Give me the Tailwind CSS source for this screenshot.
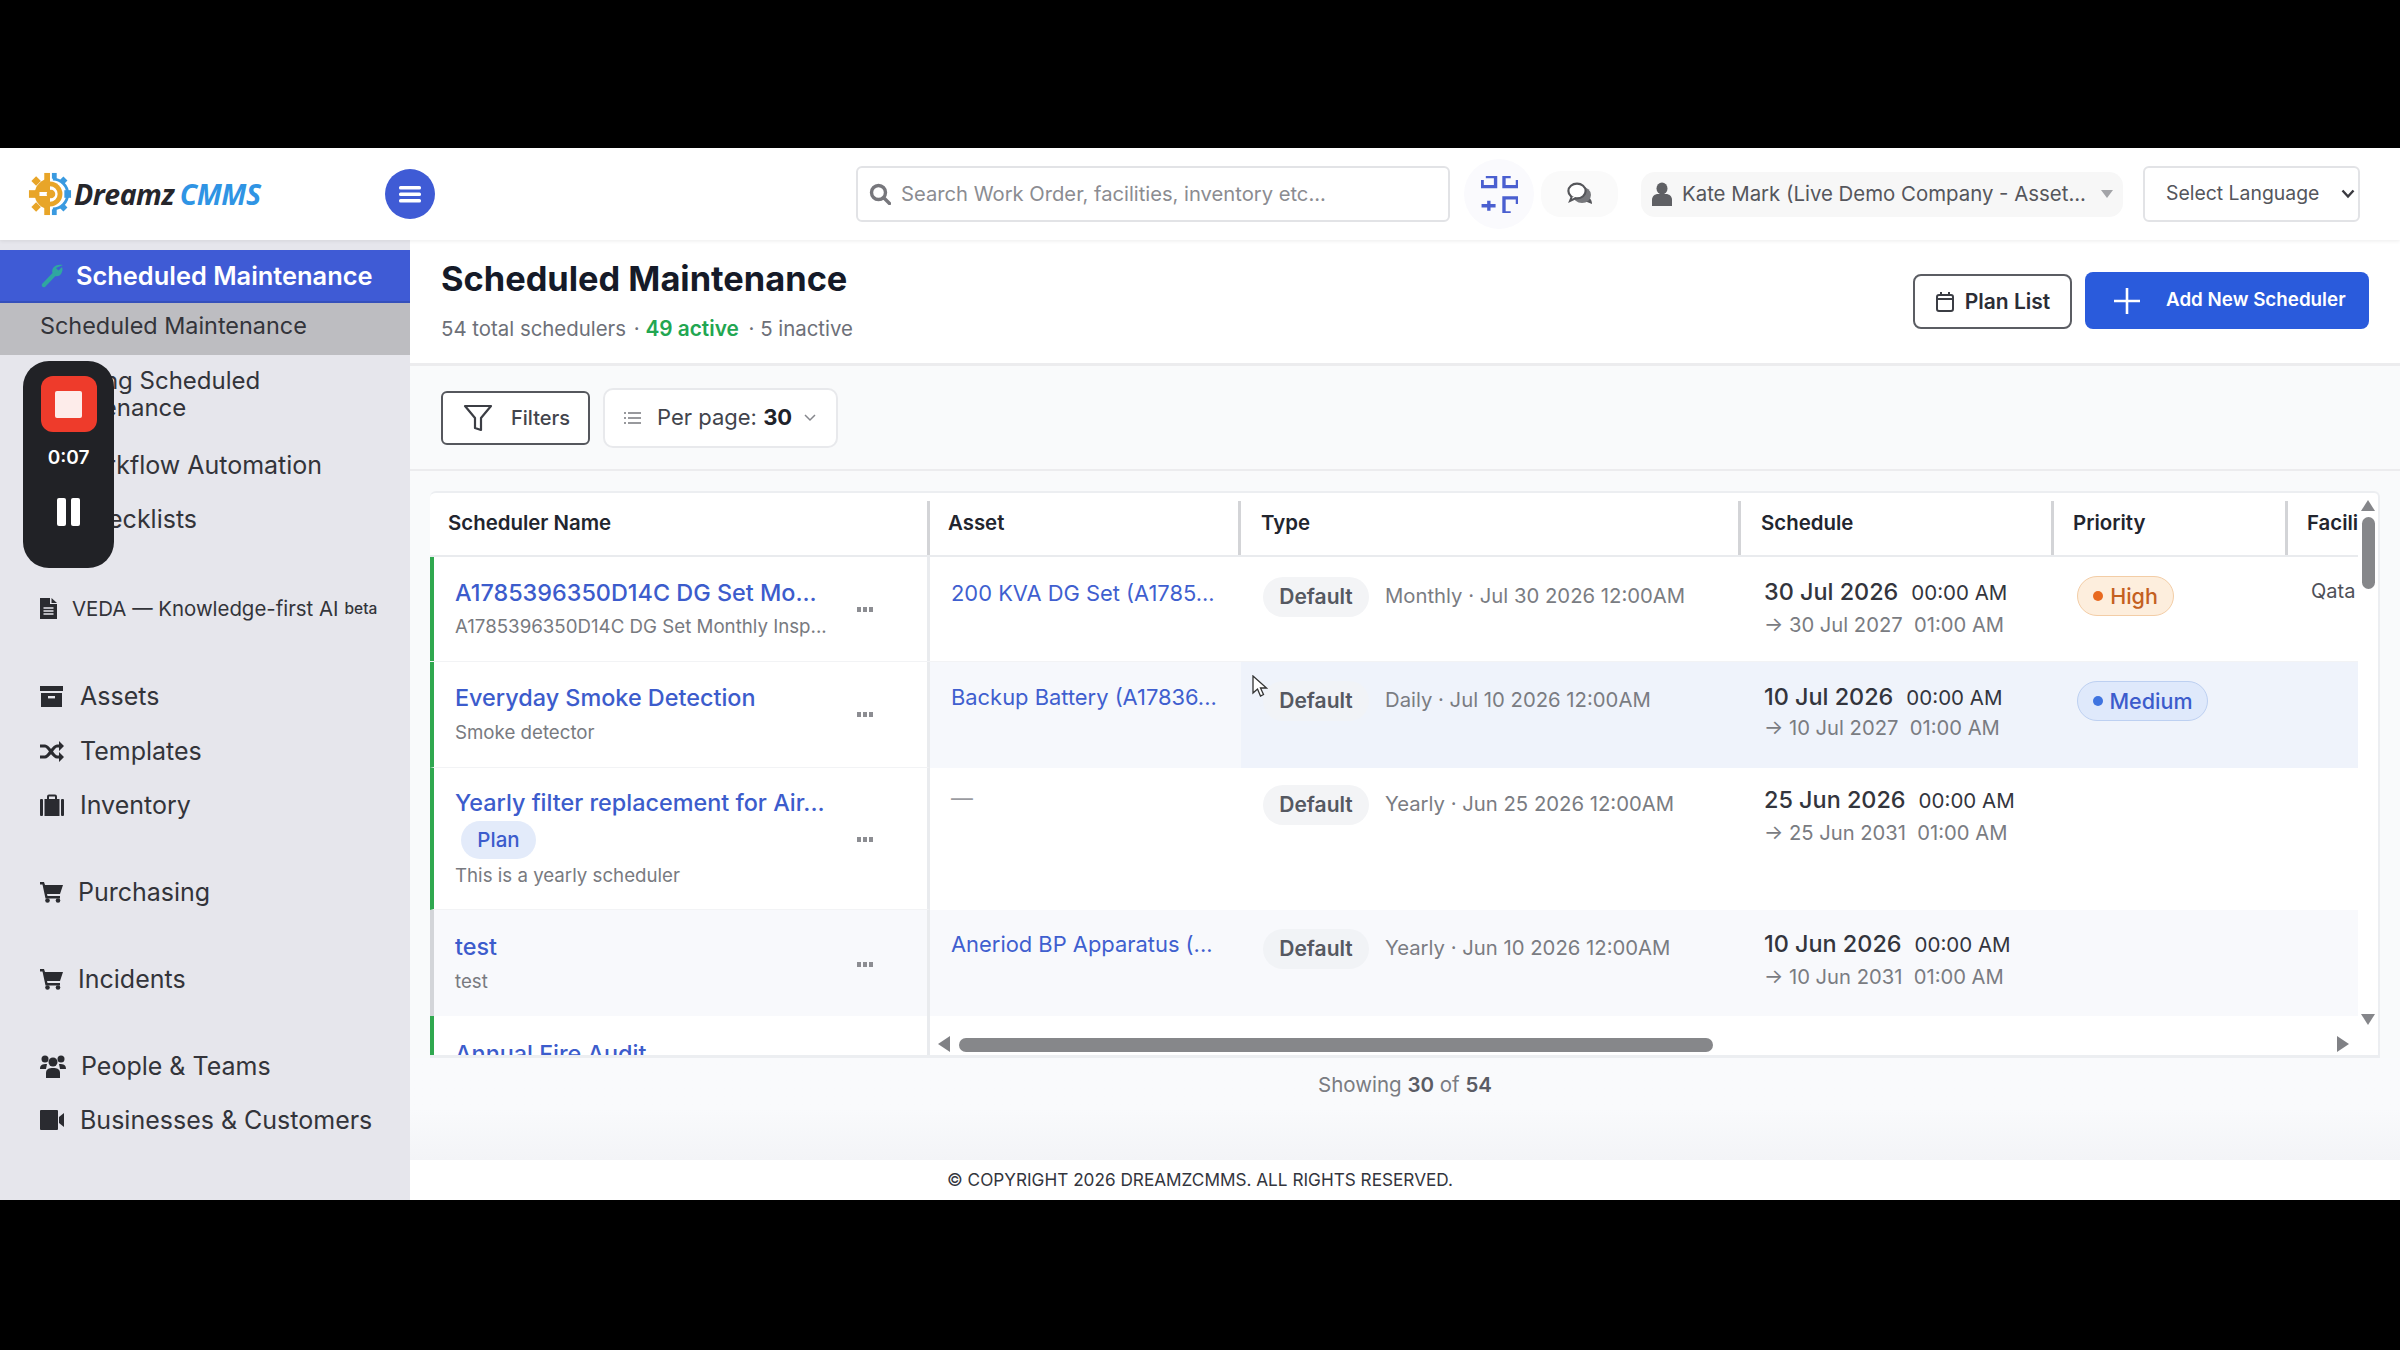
<!DOCTYPE html>
<html lang="en">
<head>
<meta charset="UTF-8">
<title>Scheduled Maintenance</title>
<script src="https://cdn.jsdelivr.net/npm/@tailwindcss/browser@4"></script>
</head>
<body class="bg-black">
<div class="relative w-[2400px] h-[1350px] bg-black overflow-hidden font-[Inter,sans-serif] text-[#1f2430]">
  <div class="h-[148px]"></div>
  <div class="h-[1052px] bg-white flex flex-col">

    <!-- top bar -->
    <header class="h-[92px] shrink-0 flex items-center bg-white relative z-10 shadow-[0_1px_4px_rgba(0,0,0,0.08)]">
      <div class="w-[385px] pl-[28px] flex items-center shrink-0">
        <svg width="44" height="44" viewBox="0 0 46 46" class="shrink-0">
          <g fill="#e8a528">
            <rect x="17" y="1" width="6" height="9"/><rect x="17" y="36" width="6" height="9"/><rect x="1" y="19" width="9" height="8"/>
            <rect x="5" y="6" width="7" height="7" transform="rotate(45 8.5 9.5)"/><rect x="5" y="33" width="7" height="7" transform="rotate(45 8.5 36.5)"/>
            <path d="M23 7a16 16 0 0 0 0 32z"/>
          </g>
          <g fill="#3a9ae0">
            <rect x="25" y="1" width="5" height="6"/><rect x="25" y="39" width="5" height="6"/><rect x="38" y="19" width="7" height="8"/>
            <rect x="34" y="6" width="6" height="6" transform="rotate(45 37 9)"/><rect x="34" y="34" width="6" height="6" transform="rotate(45 37 37)"/>
            <path d="M26 6a17 17 0 0 1 0 34v-3a14 14 0 0 0 0-28z"/>
          </g>
          <path d="M23 10a13 13 0 0 1 0 26z" fill="#e8a528"/>
          <path d="M12 21h11v-6a8 8 0 0 1 0 16v-6H12z" fill="#fff"/>
          <circle cx="24" cy="23" r="4.500" fill="#e8a528"/>
        </svg>
        <span class="ml-[2px] text-[28.5px] leading-none font-bold italic font-['Open_Sans',sans-serif] text-[#26262b] tracking-[-0.5px]">Dreamz</span>
        <span class="ml-[6px] text-[28.5px] leading-none font-bold italic font-['Open_Sans',sans-serif] text-[#2f94e4] tracking-[-0.5px]">CMMS</span>
      </div>
      <div class="w-[50px] h-[50px] rounded-full bg-[#3f5bd5] flex items-center justify-center shrink-0">
        <svg width="22" height="20" viewBox="0 0 22 20" fill="#fff"><rect x="0" y="2" width="22" height="3.4" rx="1.5"/><rect x="0" y="8.5" width="22" height="3.4" rx="1.5"/><rect x="0" y="15" width="22" height="3.4" rx="1.5"/></svg>
      </div>
      <div class="ml-[421px] w-[594px] h-[56px] rounded-[6px] border-2 border-[#e2e3e6] flex items-center pl-[11px] shrink-0">
        <svg width="22" height="22" viewBox="0 0 22 22" fill="none" stroke="#77777c" stroke-width="3.4"><circle cx="9.5" cy="9.5" r="7"/><path d="M15 15l5.5 5.5" stroke-linecap="round"/></svg>
        <span class="ml-[10px] text-[20.2px] text-[#8b8c91]">Search Work Order, facilities, inventory etc...</span>
      </div>
      <div class="ml-[14px] w-[70px] h-[70px] rounded-full bg-[#fafafd] flex items-center justify-center shrink-0">
        <svg width="37" height="37" viewBox="13 13 33 33" fill="none" stroke="#4a5fd0" stroke-width="3">
          <path d="M17.300 13.500H26V22.500H14V16.500"/><path d="M39.500 13.500H33.500V22.500H45.500V16.500"/>
          <path d="M13.500 39.500H26M20 35V44"/><path d="M45.500 38V32.500H33.500V46H39.500"/>
        </svg>
      </div>
      <div class="ml-[7px] w-[77px] h-[46px] rounded-[20px] bg-[#fafafa] flex items-center justify-center shrink-0">
        <svg width="26" height="24" viewBox="0 0 26 24"><path d="M21 16c2 0 4 2 4 6l-5-2h-4z" fill="#55565a"/><ellipse cx="15" cy="13" rx="9" ry="8" fill="#77787c"/><ellipse cx="10" cy="9" rx="8.6" ry="7.4" fill="#fff" stroke="#55565a" stroke-width="2.2"/><path d="M5 14l-2 5 6-3" fill="#fff" stroke="#55565a" stroke-width="2"/></svg>
      </div>
      <div class="ml-[23px] w-[482px] h-[45px] rounded-[14px] bg-[#f7f7f7] flex items-center pl-[11px] shrink-0">
        <svg width="20" height="24" viewBox="0 0 20 24" fill="#5f6064"><ellipse cx="10" cy="6.500" rx="5.500" ry="6"/><path d="M0 24v-6c0-4 3-6 6-6h8c3 0 6 2 6 6v6z"/></svg>
        <span class="ml-[10px] text-[20.4px] text-[#55565c] whitespace-nowrap">Kate Mark (Live Demo Company - Asset...</span>
        <svg width="12" height="8" viewBox="0 0 12 8" fill="#a3a4a8" class="ml-[15px]"><path d="M0 0h12L6 8z"/></svg>
      </div>
      <div class="ml-[20px] w-[217px] h-[56px] rounded-[6px] border-2 border-[#e2e3e6] flex items-center pl-[21px] shrink-0">
        <span class="text-[19.4px] text-[#55565c] whitespace-nowrap">Select Language</span>
        <svg width="14" height="10" viewBox="0 0 14 10" fill="none" stroke="#3a3a40" stroke-width="2.4" class="ml-[22px]"><path d="M1.5 1.5L7 7.5l5.5-6"/></svg>
      </div>
    </header>

    <div class="flex-1 flex min-h-0">
      <!-- sidebar -->
      <aside class="w-[410px] shrink-0 bg-[#e6e6ec] pt-[10px] text-[24px] leading-[27px] text-[#33343a]">
        <div class="h-[53px] bg-[#3f5bd5] border-b-2 border-[#3550bb] flex items-center pl-[40px] text-white font-semibold text-[25.4px]">
          <svg width="24" height="24" viewBox="0 0 24 24" fill="#2fa7a0" class="shrink-0"><path d="M23 1c-4-1-8 0-10 3-1 2-1 4-.5 5L2 20c-1 2 1 4 3 3L15.500 12c2 .5 4 0 5.500-2 1.500-2 2-5 1-7l-3.500 3.500L16 4z"/></svg>
          <span class="ml-[12px] whitespace-nowrap">Scheduled Maintenance</span>
        </div>
        <div class="h-[52px] bg-[#bdbdc1] flex items-center pl-[40px] pb-[8px] text-[23.4px]">Scheduled Maintenance</div>
        <div class="mt-[12px] pl-[40px] h-[54px]">Pending Scheduled<br>Maintenance</div>
        <div class="mt-[24px] h-[40px] pl-[68px] flex items-center text-[25px]">Workflow Automation</div>
        <div class="mt-[14px] h-[40px] pl-[75px] flex items-center text-[25px]">Checklists</div>

        <div class="mt-[49px] h-[40px] pl-[40px] flex items-center text-[20.4px]">
          <svg width="17" height="22" viewBox="0 0 17 22" fill="#2a2b30" class="shrink-0"><path d="M0 1h10v6h7v15H0z"/><path d="M11.500 1l5.500 5h-5.500z"/><path d="M3.500 11h10M3.500 14h10M3.500 17h10" stroke="#e6e6ec" stroke-width="1.500"/></svg>
          <span class="ml-[15px] whitespace-nowrap">VEDA — Knowledge-first AI</span>
          <span class="ml-[6px] text-[15.5px] font-medium">beta</span>
        </div>

        <div class="mt-[48px] h-[40px] pl-[40px] flex items-center text-[25px]">
          <svg width="23" height="21" viewBox="0 0 23 21" fill="#2a2b30" class="shrink-0"><rect width="23" height="5"/><path d="M1 7h21v14H1z"/><rect x="8" y="10" width="7" height="2.400" fill="#e6e6ec"/></svg>
          <span class="ml-[17px]">Assets</span>
        </div>
        <div class="mt-[15px] h-[40px] pl-[40px] flex items-center text-[25px]">
          <svg width="24" height="21" viewBox="0 0 24 21" fill="none" stroke="#2a2b30" stroke-width="3.200" class="shrink-0"><path d="M0 5h5c4 0 8 11 12 11h3M0 16h5c4 0 8-11 12-11h3"/><path d="M19 0l5 5-5 5zM19 11l5 5-5 5z" fill="#2a2b30" stroke="none"/></svg>
          <span class="ml-[16px]">Templates</span>
        </div>
        <div class="mt-[14px] h-[40px] pl-[40px] flex items-center text-[25px]">
          <svg width="24" height="22" viewBox="0 0 24 22" fill="#2a2b30" class="shrink-0"><path d="M7 5V2.500A2 2 0 0 1 9 .5h6a2 2 0 0 1 2 2V5h-2V2.500H9V5z"/><rect x="4.500" y="5" width="15" height="17"/><rect x="0" y="5" width="3" height="17" rx="1"/><rect x="21" y="5" width="3" height="17" rx="1"/></svg>
          <span class="ml-[16px]">Inventory</span>
        </div>
        <div class="mt-[47px] h-[40px] pl-[40px] flex items-center text-[25px]">
          <svg width="23" height="21" viewBox="0 0 23 21" fill="#2a2b30" class="shrink-0"><path d="M0 0h4l1 3h18l-3 9H7l.5 2H20v2.500H5.500L2.500 2.500H0z"/><circle cx="7.500" cy="18.500" r="2.300"/><circle cx="18" cy="18.500" r="2.300"/></svg>
          <span class="ml-[15px]">Purchasing</span>
        </div>
        <div class="mt-[47px] h-[40px] pl-[40px] flex items-center text-[25px]">
          <svg width="23" height="21" viewBox="0 0 23 21" fill="#2a2b30" class="shrink-0"><path d="M0 0h4l1 3h18l-3 9H7l.5 2H20v2.500H5.500L2.500 2.500H0z"/><circle cx="7.500" cy="18.500" r="2.300"/><circle cx="18" cy="18.500" r="2.300"/></svg>
          <span class="ml-[15px]">Incidents</span>
        </div>
        <div class="mt-[47px] h-[40px] pl-[40px] flex items-center text-[25px]">
          <svg width="26" height="24" viewBox="0 0 26 24" fill="#2a2b30" class="shrink-0"><circle cx="5" cy="5" r="3.500"/><circle cx="21" cy="5" r="3.500"/><circle cx="13" cy="8" r="4.500"/><path d="M0 15c0-4 2-5 7-5l-1 5H0zM26 15c0-4-2-5-7-5l1 5h6z"/><path d="M6 24v-5c0-4 3-5 7-5s7 1 7 5v5z"/></svg>
          <span class="ml-[15px] whitespace-nowrap">People &amp; Teams</span>
        </div>
        <div class="mt-[14px] h-[40px] pl-[40px] flex items-center text-[25px]">
          <svg width="24" height="20" viewBox="0 0 24 20" fill="#2a2b30" class="shrink-0"><rect width="18" height="20" rx="1"/><path d="M19 7l5-4v14l-5-4z"/></svg>
          <span class="ml-[16px] whitespace-nowrap">Businesses &amp; Customers</span>
        </div>
      </aside>

      <main class="flex-1 min-w-0 flex flex-col bg-[#f9fafb]">
        <!-- page title -->
        <div class="h-[126px] shrink-0 bg-white border-b-[3px] border-[#ececee] flex justify-between pl-[31px] pr-[31px]">
          <div>
            <h1 class="mt-[17px] text-[34.4px] leading-[44px] font-bold text-[#151a28]">Scheduled Maintenance</h1>
            <p class="mt-[14px] text-[20.4px] leading-[28px] text-[#6d7078] whitespace-nowrap">54 total schedulers <span class="ml-[2px]">·</span> <span class="font-semibold text-[20.8px] text-[#22a651]">49 active</span> <span class="ml-[4px]">·</span> 5 inactive</p>
          </div>
          <div class="flex items-start gap-[13px] pt-[32px]">
            <div class="mt-[2px] w-[159px] h-[55px] rounded-[8px] border-2 border-[#5b5d63] flex items-center justify-center gap-[10px] text-[21px] font-semibold text-[#2b2d36]">
              <svg width="20" height="22" viewBox="0 0 20 22" fill="none" stroke="#3b3d44" stroke-width="2"><rect x="2" y="4" width="16" height="16" rx="2"/><path d="M2 8h16M6 1v4M14 1v4"/></svg>
              Plan List
            </div>
            <div class="w-[284px] h-[57px] rounded-[8px] bg-[#2a5bdc] flex items-center pl-[29px] text-white font-semibold text-[18.8px]">
              <svg width="26" height="26" viewBox="0 0 26 26" stroke="#fff" stroke-width="2.600"><path d="M13 0v26M0 13h26"/></svg>
              <span class="ml-[26px] whitespace-nowrap">Add New Scheduler</span>
            </div>
          </div>
        </div>

        <!-- filters -->
        <div class="h-[105px] shrink-0 border-b-2 border-[#ececee] flex items-center pl-[31px] gap-[13px]">
          <div class="w-[149px] h-[54px] rounded-[6px] border-2 border-[#55575d] bg-white flex items-center pl-[20px] text-[20px] text-[#42444c]">
            <svg width="30" height="30" viewBox="0 0 30 30" fill="none" stroke="#3b3d44" stroke-width="2.200" stroke-linejoin="round"><path d="M2 3h26L18 15v12l-6-2V15z"/></svg>
            <span class="ml-[18px] font-medium">Filters</span>
          </div>
          <div class="w-[235px] h-[60px] rounded-[10px] border-2 border-[#e8e9ec] bg-white flex items-center pl-[19px] text-[22px] text-[#42444c]">
            <svg width="17" height="14" viewBox="0 0 17 14" stroke="#77787e" stroke-width="1.600"><path d="M0 2h2M4 2h13M0 7h2M4 7h13M0 12h2M4 12h13"/></svg>
            <span class="ml-[16px] whitespace-nowrap">Per page: <b class="font-bold text-[#20222a]">30</b></span>
            <svg width="12" height="8" viewBox="0 0 12 8" fill="none" stroke="#85868c" stroke-width="1.500" class="ml-[12px]"><path d="M1 1l5 5 5-5"/></svg>
          </div>
        </div>

        <!-- table -->
        <div class="mt-[20px] ml-[20px] w-[1950px] h-[567px] shrink-0 bg-white border-t-2 border-r-2 border-b-[3px] border-[#eceef1] rounded-t-[6px] flex overflow-hidden">
          <div class="w-[1928px] shrink-0 flex flex-col">
            <div class="h-[64px] shrink-0 flex border-b-2 border-[#e9ebee] text-[20.4px] font-semibold text-[#22252e] whitespace-nowrap">
              <div class="w-[500px] shrink-0 pl-[18px] pt-[15px] relative">Scheduler Name<i class="absolute right-0 top-[8px] bottom-0 w-[3px] bg-[#d3d4d7]"></i></div>
              <div class="w-[311px] shrink-0 pl-[18px] pt-[15px] relative">Asset<i class="absolute right-0 top-[8px] bottom-0 w-[3px] bg-[#d3d4d7]"></i></div>
              <div class="w-[500px] shrink-0 pl-[20px] pt-[15px] relative">Type<i class="absolute right-0 top-[8px] bottom-0 w-[3px] bg-[#d3d4d7]"></i></div>
              <div class="w-[313px] shrink-0 pl-[20px] pt-[15px] relative">Schedule<i class="absolute right-0 top-[8px] bottom-0 w-[3px] bg-[#d3d4d7]"></i></div>
              <div class="w-[234px] shrink-0 pl-[19px] pt-[15px] relative">Priority<i class="absolute right-0 top-[8px] bottom-0 w-[3px] bg-[#d3d4d7]"></i></div>
              <div class="flex-1 pl-[19px] pt-[15px]">Facili</div>
            </div>

            <!-- row 1 -->
            <div class="h-[105px] shrink-0 flex border-b border-[#f2f3f5]">
              <div class="w-[500px] shrink-0 border-l-[4px] border-[#2fa84f] border-r-[3px] border-r-[#e9ebee] pl-[21px] pt-[21px] flex justify-between pr-[54px]">
                <div>
                  <div class="text-[23.4px] leading-[30px] font-medium text-[#3c5ccc] whitespace-nowrap">A1785396350D14C DG Set Mo...</div>
                  <div class="mt-[6px] text-[18.7px] leading-[26px] text-[#787a80] whitespace-nowrap">A1785396350D14C DG Set Monthly Insp...</div>
                </div>
                <svg width="16" height="5" viewBox="0 0 16 5" fill="#8c8d92" class="mt-[29px] shrink-0"><rect width="4" height="5"/><rect x="6" width="4" height="5"/><rect x="12" width="4" height="5"/></svg>
              </div>
              <div class="w-[311px] shrink-0 pl-[21px] pt-[21px] text-[21.9px] leading-[30px] text-[#3f5fcf] whitespace-nowrap">200 KVA DG Set (A1785...</div>
              <div class="w-[500px] shrink-0 pl-[22px] pt-[20px] flex items-start text-[20.3px] text-[#7a7c82]">
                <span class="w-[106px] h-[40px] rounded-full bg-[#f3f4f6] flex items-center justify-center text-[21px] font-semibold text-[#555861]">Default</span>
                <span class="ml-[16px] leading-[38px] whitespace-nowrap">Monthly · Jul 30 2026 12:00AM</span>
              </div>
              <div class="w-[313px] shrink-0 pl-[23px] pt-[19px] whitespace-nowrap">
                <div class="h-[32px] leading-[32px] text-[#33353d]"><span class="text-[23.4px] font-medium">30 Jul 2026</span><span class="ml-[13px] text-[20.5px]">00:00 AM</span></div>
                <div class="h-[33px] leading-[33px] text-[20.2px] text-[#7a7c82]">→ 30 Jul 2027 &nbsp;01:00 AM</div>
              </div>
              <div class="w-[234px] shrink-0 pl-[23px] pt-[19px]">
                <span class="inline-flex h-[40px] w-[97px] items-center justify-center gap-[7px] rounded-full bg-[#fdeedd] border border-[#f3cda6] text-[21.5px] font-medium text-[#c4601f]"><i class="w-[10px] h-[10px] rounded-full bg-[#e8691f]"></i>High</span>
              </div>
              <div class="flex-1 pl-[23px] pt-[20px] text-[20px] leading-[28px] text-[#4e5058]">Qata</div>
            </div>

            <!-- row 2 -->
            <div class="h-[106px] shrink-0 flex">
              <div class="w-[500px] shrink-0 border-l-[4px] border-[#2fa84f] border-r-[3px] border-r-[#e9ebee] pl-[21px] pt-[21px] flex justify-between pr-[54px] border-b border-b-[#f2f3f5]">
                <div>
                  <div class="text-[23.4px] leading-[30px] font-medium text-[#3c5ccc] whitespace-nowrap">Everyday Smoke Detection</div>
                  <div class="mt-[7px] text-[18.7px] leading-[26px] text-[#787a80] whitespace-nowrap">Smoke detector</div>
                </div>
                <svg width="16" height="5" viewBox="0 0 16 5" fill="#8c8d92" class="mt-[29px] shrink-0"><rect width="4" height="5"/><rect x="6" width="4" height="5"/><rect x="12" width="4" height="5"/></svg>
              </div>
              <div class="w-[311px] shrink-0 pl-[21px] pt-[20px] text-[21.9px] leading-[30px] text-[#3f5fcf] whitespace-nowrap bg-[#f6f8fc]">Backup Battery (A17836...</div>
              <div class="w-[500px] shrink-0 pl-[22px] pt-[19px] flex items-start text-[20.3px] text-[#7a7c82] bg-[#eff3fb]">
                <span class="w-[106px] h-[40px] rounded-full bg-[#f1f3f7] flex items-center justify-center text-[21px] font-semibold text-[#555861]">Default</span>
                <span class="ml-[16px] leading-[38px] whitespace-nowrap">Daily · Jul 10 2026 12:00AM</span>
              </div>
              <div class="w-[313px] shrink-0 pl-[23px] pt-[19px] whitespace-nowrap bg-[#eff3fb]">
                <div class="h-[32px] leading-[32px] text-[#33353d]"><span class="text-[23.4px] font-medium">10 Jul 2026</span><span class="ml-[13px] text-[20.5px]">00:00 AM</span></div>
                <div class="h-[30px] leading-[30px] text-[20.2px] text-[#7a7c82]">→ 10 Jul 2027 &nbsp;01:00 AM</div>
              </div>
              <div class="w-[234px] shrink-0 pl-[23px] pt-[19px] bg-[#eff3fb]">
                <span class="inline-flex h-[40px] w-[131px] items-center justify-center gap-[7px] rounded-full bg-[#dfe9fb] border border-[#bdd0f1] text-[21.5px] font-medium text-[#3c5ccc]"><i class="w-[10px] h-[10px] rounded-full bg-[#3f74e0]"></i>Medium</span>
              </div>
              <div class="flex-1 bg-[#eff3fb]"></div>
            </div>

            <!-- row 3 -->
            <div class="h-[142px] shrink-0 flex">
              <div class="w-[500px] shrink-0 border-l-[4px] border-[#2fa84f] border-r-[3px] border-r-[#e9ebee] pl-[21px] pt-[20px] flex justify-between pr-[54px] border-b border-b-[#f2f3f5]">
                <div>
                  <div class="text-[23.4px] leading-[30px] font-medium text-[#3c5ccc] whitespace-nowrap">Yearly filter replacement for Air...</div>
                  <div class="mt-[3px] ml-[6px] w-[75px] h-[38px] rounded-full bg-[#e3ebfa] flex items-center justify-center text-[20.5px] font-medium text-[#3c5ccc]">Plan</div>
                  <div class="mt-[4px] text-[18.7px] leading-[26px] text-[#787a80] whitespace-nowrap">This is a yearly scheduler</div>
                </div>
                <svg width="16" height="5" viewBox="0 0 16 5" fill="#8c8d92" class="mt-[49px] shrink-0"><rect width="4" height="5"/><rect x="6" width="4" height="5"/><rect x="12" width="4" height="5"/></svg>
              </div>
              <div class="w-[311px] shrink-0 pl-[21px] pt-[15px] text-[21.9px] leading-[30px] text-[#9a9ba0]">—</div>
              <div class="w-[500px] shrink-0 pl-[22px] pt-[17px] flex items-start text-[20.3px] text-[#7a7c82]">
                <span class="w-[106px] h-[40px] rounded-full bg-[#f3f4f6] flex items-center justify-center text-[21px] font-semibold text-[#555861]">Default</span>
                <span class="ml-[16px] leading-[38px] whitespace-nowrap">Yearly · Jun 25 2026 12:00AM</span>
              </div>
              <div class="w-[313px] shrink-0 pl-[23px] pt-[16px] whitespace-nowrap">
                <div class="h-[33px] leading-[32px] text-[#33353d]"><span class="text-[23.4px] font-medium">25 Jun 2026</span><span class="ml-[13px] text-[20.5px]">00:00 AM</span></div>
                <div class="h-[32px] leading-[32px] text-[20.2px] text-[#7a7c82]">→ 25 Jun 2031 &nbsp;01:00 AM</div>
              </div>
              <div class="flex-1"></div>
            </div>

            <!-- row 4 -->
            <div class="h-[106px] shrink-0 flex bg-[#f8f9fc]">
              <div class="w-[500px] shrink-0 border-l-[4px] border-[#d3d5d9] border-r-[3px] border-r-[#e9ebee] pl-[21px] pt-[22px] flex justify-between pr-[54px]">
                <div>
                  <div class="text-[23.4px] leading-[30px] font-medium text-[#3c5ccc] whitespace-nowrap">test</div>
                  <div class="mt-[7px] text-[18.7px] leading-[26px] text-[#787a80]">test</div>
                </div>
                <svg width="16" height="5" viewBox="0 0 16 5" fill="#8c8d92" class="mt-[30px] shrink-0"><rect width="4" height="5"/><rect x="6" width="4" height="5"/><rect x="12" width="4" height="5"/></svg>
              </div>
              <div class="w-[311px] shrink-0 pl-[21px] pt-[19px] text-[21.9px] leading-[30px] text-[#3f5fcf] whitespace-nowrap">Aneriod BP Apparatus (...</div>
              <div class="w-[500px] shrink-0 pl-[22px] pt-[19px] flex items-start text-[20.3px] text-[#7a7c82]">
                <span class="w-[106px] h-[40px] rounded-full bg-[#f1f3f6] flex items-center justify-center text-[21px] font-semibold text-[#555861]">Default</span>
                <span class="ml-[16px] leading-[38px] whitespace-nowrap">Yearly · Jun 10 2026 12:00AM</span>
              </div>
              <div class="w-[313px] shrink-0 pl-[23px] pt-[18px] whitespace-nowrap">
                <div class="h-[33px] leading-[32px] text-[#33353d]"><span class="text-[23.4px] font-medium">10 Jun 2026</span><span class="ml-[13px] text-[20.5px]">00:00 AM</span></div>
                <div class="h-[32px] leading-[32px] text-[20.2px] text-[#7a7c82]">→ 10 Jun 2031 &nbsp;01:00 AM</div>
              </div>
              <div class="flex-1"></div>
            </div>

            <!-- row 5, cut off by the scroll area -->
            <div class="flex-1 min-h-0 flex overflow-hidden">
              <div class="w-[500px] shrink-0 border-l-[4px] border-[#2fa84f] border-r-[3px] border-r-[#e9ebee] pl-[21px] pt-[23px] text-[23.4px] leading-[30px] font-medium text-[#3c5ccc] whitespace-nowrap">Annual Fire Audit</div>
              <div class="flex-1 flex items-end pb-[3px] pl-[8px]">
                <svg width="12" height="16" viewBox="0 0 12 16" fill="#808185"><path d="M12 0v16L0 8z"/></svg>
                <div class="ml-[9px] w-[754px] h-[14px] rounded-full bg-[#86878a]"></div>
                <svg width="12" height="16" viewBox="0 0 12 16" fill="#808185" class="ml-[624px]"><path d="M0 0v16l12-8z"/></svg>
              </div>
            </div>
          </div>
          <!-- vertical scrollbar -->
          <div class="flex-1 flex flex-col items-center pt-[7px] pb-[30px]">
            <svg width="14" height="11" viewBox="0 0 14 11" fill="#85868a"><path d="M7 0l7 11H0z"/></svg>
            <div class="mt-[6px] w-[13px] h-[72px] rounded-full bg-[#86878a]"></div>
            <div class="flex-1"></div>
            <svg width="14" height="11" viewBox="0 0 14 11" fill="#85868a"><path d="M0 0h14L7 11z"/></svg>
          </div>
        </div>

        <div class="h-[102px] shrink-0 pt-[13px] text-center text-[20.5px] leading-[28px] text-[#7a7c82] bg-linear-to-b from-[#f9fafc] from-50% to-[#f3f4f7]">Showing <b class="font-semibold text-[#5a5c64]">30</b> of <b class="font-semibold text-[#5a5c64]">54</b></div>
        <!-- the copyright is centred on the window, not on the content column -->
        <div class="h-[40px] shrink-0 bg-white pr-[410px] flex items-center justify-center text-[17.2px] text-[#33353d] whitespace-nowrap">© COPYRIGHT 2026 DREAMZCMMS. ALL RIGHTS RESERVED.</div>
      </main>
    </div>
  </div>

  <!-- screen recorder widget -->
  <div class="absolute left-[23px] top-[361px] w-[91px] h-[207px] rounded-[26px] bg-[#212226] flex flex-col items-center pt-[15px]">
    <div class="w-[56px] h-[56px] rounded-[12px] bg-[#ee3b2b] flex items-center justify-center">
      <div class="w-[27px] h-[27px] rounded-[2px] bg-[#fdecea]"></div>
    </div>
    <div class="mt-[14px] text-[19px] leading-[24px] font-semibold text-white">0:07</div>
    <div class="mt-[28px] flex gap-[5px]"><i class="w-[9px] h-[28px] rounded-[2px] bg-white"></i><i class="w-[9px] h-[28px] rounded-[2px] bg-white"></i></div>
  </div>

  <!-- mouse pointer -->
  <svg class="absolute left-[1252px] top-[675px]" width="16" height="22" viewBox="0 0 16 22" fill="#fff" stroke="#333" stroke-width="1.300"><path d="M1 1v17l4.500-4 3 7 3-1.500-3-6.500h6z"/></svg>
</div>
</body>
</html>
